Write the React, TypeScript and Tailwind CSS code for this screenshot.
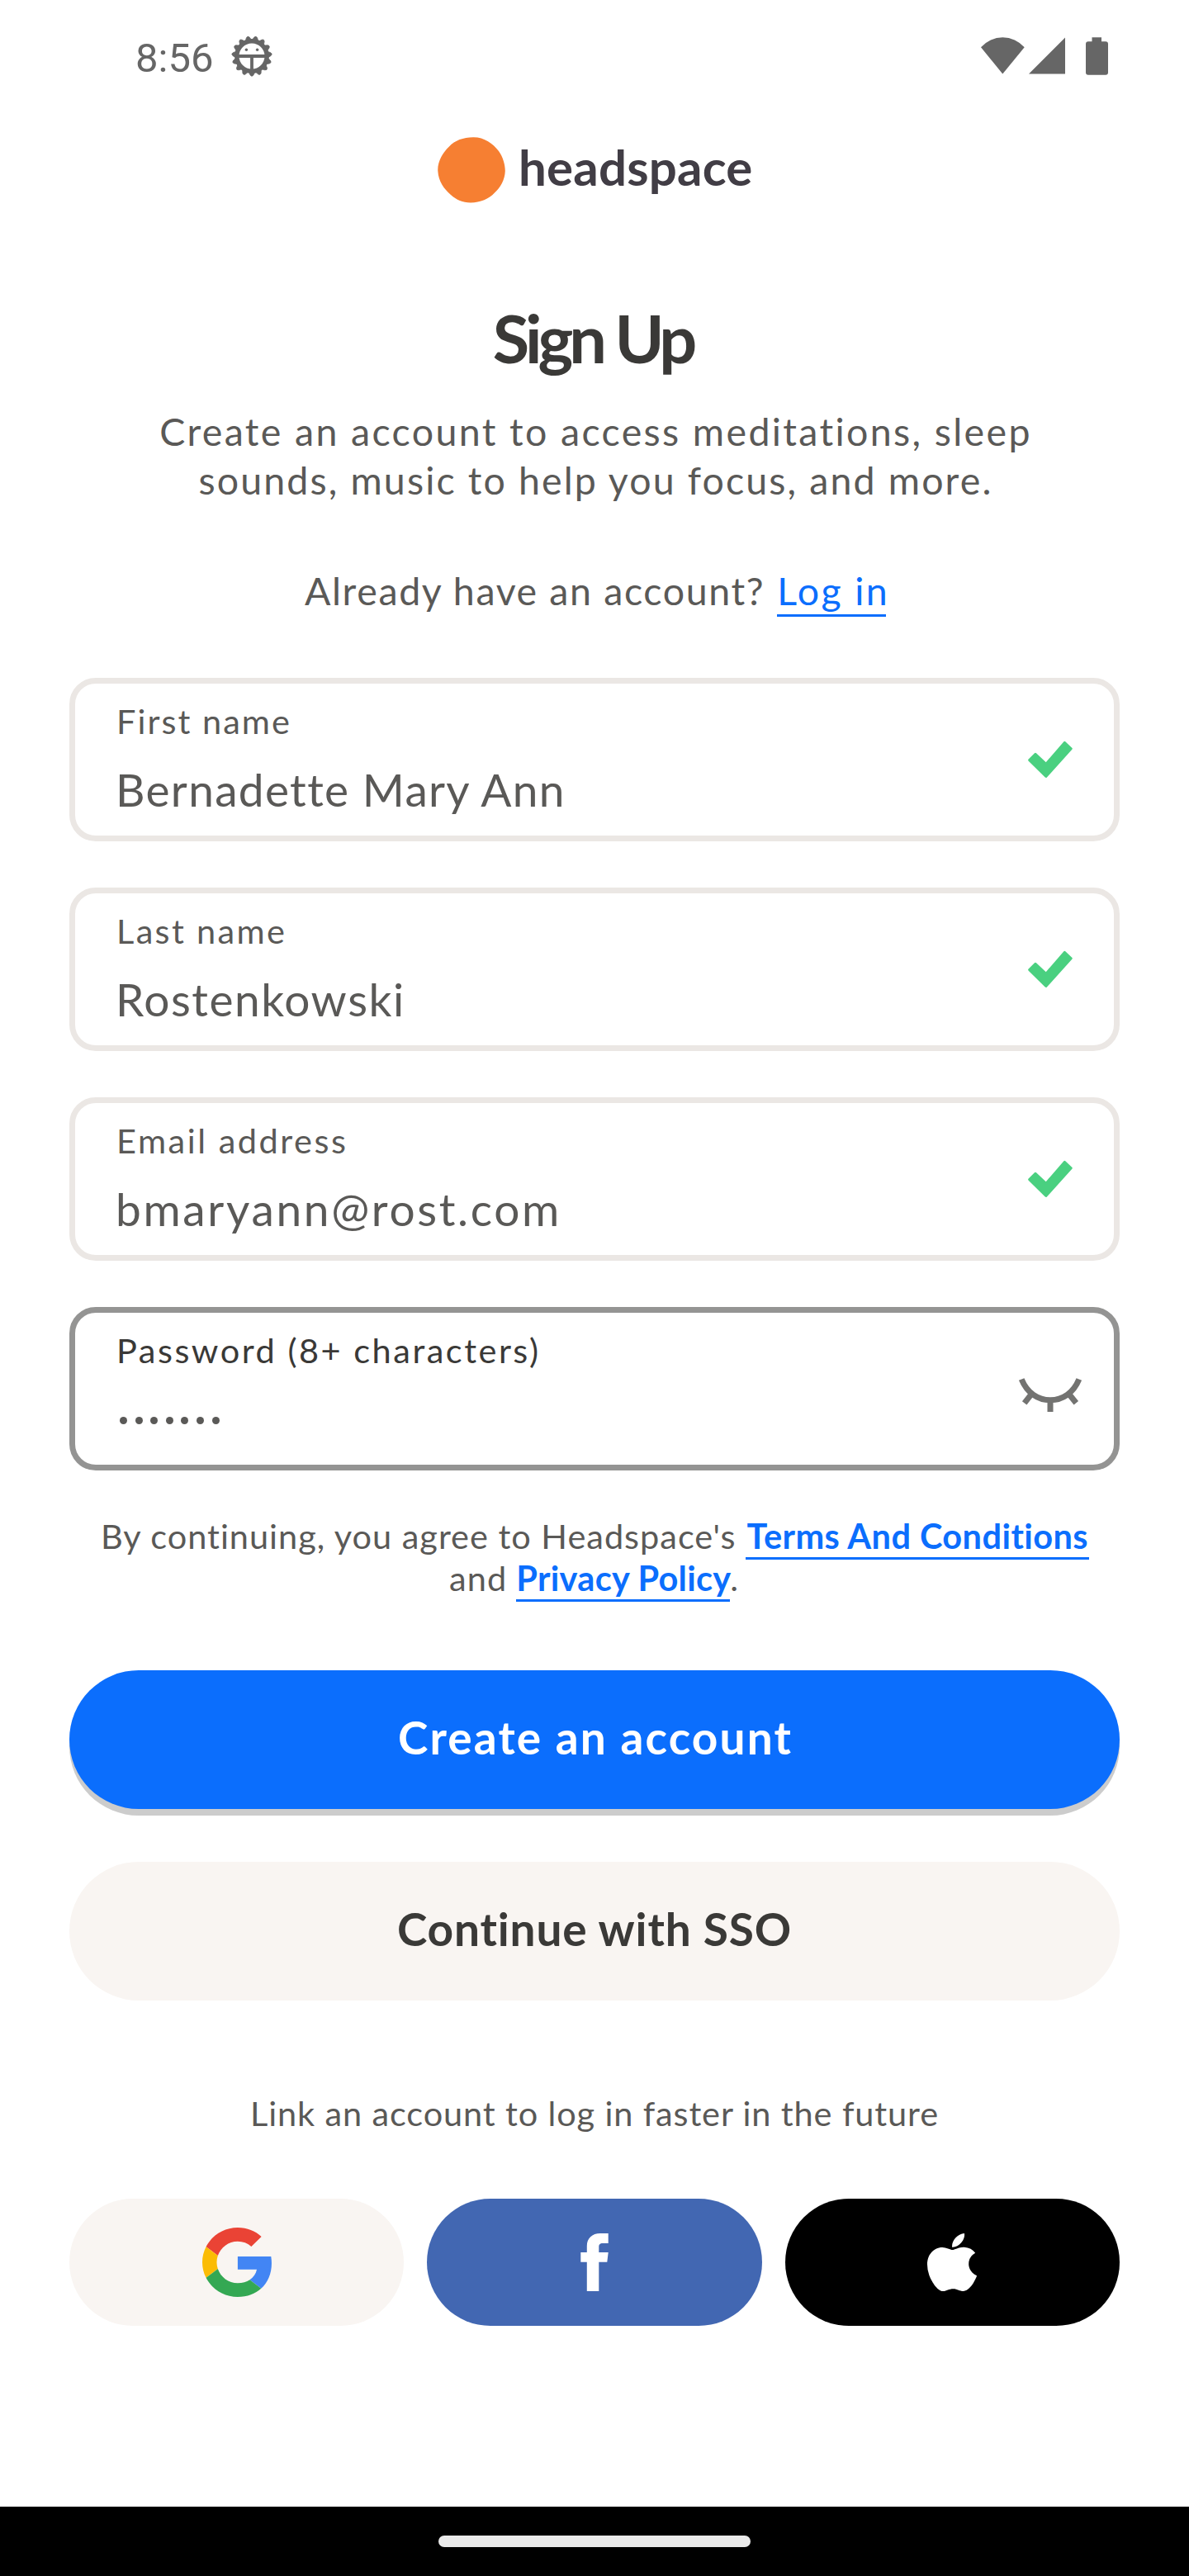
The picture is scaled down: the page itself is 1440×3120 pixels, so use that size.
import React from "react";

const TEETH = Array.from({ length: 15 }, (_, i) => 12 + i * 24);

function CogFace() {
  return (
    <svg className="h-[50px] w-[50px]" viewBox="-25 -25 50 50" fill="none">
      <circle r="18.2" stroke="#666" strokeWidth="5.4" />
      {TEETH.map((a) => (
        <path key={a} d="M-3.6 -19.5L-1.9 -23Q0 -25.6 1.9 -23L3.6 -19.5Z" fill="#666" stroke="#666" strokeWidth="0.8" strokeLinejoin="round" transform={`rotate(${a})`} />
      ))}
      <path d="M-17 0H17M0 0V17" stroke="#666" strokeWidth="3.8" />
      <circle cx="-6.6" cy="-7.7" r="1.7" fill="#666" />
      <circle cx="6.6" cy="-7.7" r="1.7" fill="#666" />
    </svg>
  );
}

function StatusBar() {
  return (
    <header className="flex h-[136px] items-center justify-between pl-[164px] pr-[98px]">
      <div className="flex items-center">
        <span className="w-[116px] pt-[5px] font-['Roboto'] text-[49px] leading-[56px] text-[#666]">8:56</span>
        <CogFace />
      </div>
      <div className="flex items-start">
        <svg className="h-[46px] w-[53px]" viewBox="0 0 53 46" fill="#666">
          <path d="M0 12.3A35 35 0 0 1 52.7 12.3L26.3 44.6Z" />
        </svg>
        <svg className="ml-[5px] h-[46px] w-[44px]" viewBox="0 0 44 46" fill="#666">
          <path d="M0 44.6L44 0.6V44.6Z" />
        </svg>
        <svg className="ml-[25px] h-[46px] w-[27px]" viewBox="0 0 27 46" fill="#666">
          <path d="M7.5 0.3H19V5.2H24Q27 5.2 27 8.2V42.7Q27 45.7 24 45.7H3Q0 45.7 0 42.7V8.2Q0 5.2 3 5.2H7.5Z" />
        </svg>
      </div>
    </header>
  );
}

function Logo() {
  return (
    <div className="mt-[30px] flex h-[80px] items-center pl-[446px]">
      <svg className="h-[80px] w-[82px]" viewBox="0 0 82 80" fill="#f67f32">
        <path d="M43 0.3C56 0 67 8 74 17C79 24 81.7 33 81.8 41C81.5 52 76 61 69 67.5C62 75 52 79 40 79.5C30 79.5 23 76 16 70C8 63 1 54 0.3 41C-0.3 30 6 19 14 11.5C21 4 31 0.5 43 0.3Z" />
      </svg>
      <span className="ml-[16px] pb-[8px] text-[60px] font-bold leading-[70px] tracking-[0.2px] text-[#413d45]">headspace</span>
    </div>
  );
}

function Check() {
  return (
    <svg className="mr-[50px] h-[46px] w-[54px]" viewBox="0 0 54 46" fill="#4ad080" stroke="#4ad080" strokeWidth="3" strokeLinejoin="round">
      <path d="M1.7 23.6L9 16.3L21.8 28.4L44.3 2.4L52.2 9.8L21.8 43.5Z" />
    </svg>
  );
}

function ClosedEye() {
  return (
    <svg className="mr-[39px] h-[56px] w-[76px]" viewBox="0 0 76 56" fill="none" stroke="#737371" strokeWidth="7">
      <path d="M3.2 16.5C10 33 23 41.7 38 41.7S66 33 72.8 16.5M14.5 35.3L6.7 45.3M38 41.7V56M61.3 35.3L69.3 45.3" />
    </svg>
  );
}

function Field({ label, children, focused, icon }: { label: React.ReactNode; children: React.ReactNode; focused?: boolean; icon: React.ReactNode }) {
  return (
    <div className={focused ? "flex h-[198px] items-center justify-between rounded-[32px] border-[7px] border-[#949493] text-[#3a3937]" : "flex h-[198px] items-center justify-between rounded-[32px] border-[7px] border-[#ebe7e4] text-[#5a5957]"}>
      <div className="flex h-full flex-col pl-[50px] pt-[20px]">
        <div className="text-[41.5px] leading-[50px]">{label}</div>
        <div className="-ml-px mt-[25px] flex h-[66px] text-[55px] leading-[66px] text-[#5a5957]">{children}</div>
      </div>
      {icon}
    </div>
  );
}

const DOTS = [0, 1, 2, 3, 4, 5, 6];

export default function App() {
  return (
    <div className="flex h-[3120px] w-[1440px] flex-col bg-white font-['Lato',sans-serif] text-[#5a5957]">
      <StatusBar />
      <main className="flex flex-col px-[84px]">
        <Logo />
        <h1 className="mt-[114px] pr-[4px] text-center text-[81px] font-bold leading-[98px] tracking-[-5.05px] text-[#3a3937]">Sign Up</h1>
        <p className="mt-[35px] flex flex-col items-center whitespace-nowrap pl-[3px] text-[46.5px] leading-[59px]">
          <span className="tracking-[2.36px]">Create an account to access meditations, sleep</span>
          <span className="tracking-[2.12px]">sounds, music to help you focus, and more.</span>
        </p>
        <p className="mt-[75px] flex h-[59px] whitespace-nowrap pl-[285px] text-[46.5px] leading-[59px]">
          <span className="tracking-[1.63px]">Already have an account?</span>
          <a className="ml-[15px] h-[61px] w-[132px] border-b-[3px] border-[#0b6efd] tracking-[2.37px] text-[#0b6efd]">Log in</a>
        </p>

        <form className="mt-[76px] flex flex-col gap-14">
          <Field label={<span className="tracking-[2.03px]">First name</span>} icon={<Check />}>
            <span className="tracking-[1.32px]">Bernadette Mary Ann</span>
          </Field>
          <Field label={<span className="tracking-[2.33px]">Last name</span>} icon={<Check />}>
            <span className="tracking-[1.56px]">Rostenkowski</span>
          </Field>
          <Field label={<span className="tracking-[2.52px]">Email address</span>} icon={<Check />}>
            <span className="tracking-[2.66px]">bmaryann@rost.com</span>
          </Field>
          <Field focused label={<span className="tracking-[2.51px]">Password (8+ characters)</span>} icon={<ClosedEye />}>
            <span className="flex items-center gap-[9.6px] pl-[5px] pt-[5px]">
              {DOTS.map((d) => (
                <i key={d} className="size-[9px] rounded-full bg-[#5a5957]" />
              ))}
            </span>
          </Field>
        </form>

        <div className="mt-[54px] flex flex-col whitespace-nowrap text-[41.5px] leading-[51px]">
          <div className="flex h-[51px] pl-[38px]">
            <span className="tracking-[0.98px]">By continuing, you agree to Headspace's</span>
            <a className="ml-[11px] h-[54px] w-[416px] border-b-[3px] border-[#0b6efd] pl-[2px] font-bold tracking-[0.43px] text-[#0b6efd]">Terms And Conditions</a>
          </div>
          <div className="flex h-[51px] pl-[460px]">
            <span className="tracking-[1.11px]">and</span>
            <a className="ml-[11px] h-[54px] w-[259px] border-b-[3px] border-[#0b6efd] font-bold tracking-[0.29px] text-[#0b6efd]">Privacy Policy</a>
            <span>.</span>
          </div>
        </div>

        <button className="mt-[86px] flex h-[168px] items-center justify-center rounded-full bg-[#0b6efd] pb-[5px] pl-[2px] text-[55px] font-bold tracking-[2.13px] text-white shadow-[0_8px_0_#cccccc]">Create an account</button>
        <button className="mt-16 flex h-[168px] items-center justify-center rounded-full bg-[#f9f5f2] pb-[5px] text-[55px] font-bold tracking-[0.84px] text-[#3a3937]">Continue with SSO</button>

        <p className="mt-[111px] whitespace-nowrap text-center text-[41.5px] leading-[50px] tracking-[0.87px]">Link an account to log in faster in the future</p>

        <div className="mt-[79px] grid grid-cols-3 gap-7">
          <button className="flex h-[154px] items-center justify-center rounded-full bg-[#f9f5f2]">
            <svg className="h-[84px] w-[84px]" viewBox="0 0 47 48" preserveAspectRatio="none">
              <path fill="#EA4335" d="M24 9.5c3.54 0 6.71 1.22 9.21 3.6l6.85-6.85C35.9 2.38 30.47 0 24 0 14.62 0 6.51 5.38 2.56 13.22l7.98 6.19C12.43 13.72 17.74 9.5 24 9.5z" />
              <path fill="#4285F4" d="M46.98 24.55c0-1.57-.15-3.09-.38-4.55H24v9.02h12.94c-.58 2.96-2.26 5.48-4.78 7.18l7.73 6c4.51-4.18 7.09-10.36 7.09-17.65z" />
              <path fill="#FBBC05" d="M10.53 28.59c-.48-1.45-.76-2.99-.76-4.59s.27-3.14.76-4.59l-7.98-6.19C.92 16.46 0 20.12 0 24c0 3.88.92 7.54 2.56 10.78l7.97-6.19z" />
              <path fill="#34A853" d="M24 48c6.48 0 11.93-2.13 15.89-5.81l-7.73-6c-2.15 1.45-4.92 2.3-8.16 2.3-6.26 0-11.57-4.22-13.47-9.91l-7.98 6.19C6.51 42.62 14.62 48 24 48z" />
            </svg>
          </button>
          <button className="flex h-[154px] items-center justify-center rounded-full bg-[#4267b2]">
            <svg className="h-[70px] w-[34px]" viewBox="0 0 34 70" fill="#fff">
              <path d="M22.3 70V34.7H32.3L33.7 23H22.3V16.5C22.3 13.5 23.5 12 27 12H33.7V0H24C14 0 7.8 6 7.8 15.5V23H0.3V34.7H7.8V70Z" />
            </svg>
          </button>
          <button className="flex h-[154px] items-center justify-center rounded-full bg-black">
            <svg className="h-[70px] w-[60px]" viewBox="4 32 376 448" preserveAspectRatio="none" fill="#fff">
              <path d="M318.7 268.7c-.2-36.7 16.4-64.4 50-84.8-18.8-26.9-47.2-41.7-84.7-44.6-35.5-2.8-74.3 20.7-88.5 20.7-15 0-49.4-19.7-76.4-19.7C63.3 141.2 4 184.8 4 273.5q0 39.3 14.4 81.2c12.8 36.7 59 126.7 107.2 125.2 25.2-.6 43-17.9 75.8-17.9 31.8 0 48.3 17.9 76.4 17.9 48.6-.7 90.4-82.5 102.6-119.3-65.2-30.7-61.7-90-61.7-91.9zm-56.6-164.2c27.3-32.4 24.8-61.9 24-72.5-24.1 1.4-52 16.4-67.9 34.9-17.5 19.8-27.8 44.3-25.6 71.9 26.1 2 49.9-11.4 69.5-34.3z" />
            </svg>
          </button>
        </div>
      </main>
      <footer className="mt-auto flex h-[84px] justify-center bg-black pt-[35px]">
        <div className="h-[14px] w-[378px] rounded-full bg-[#eaeaea]" />
      </footer>
    </div>
  );
}
